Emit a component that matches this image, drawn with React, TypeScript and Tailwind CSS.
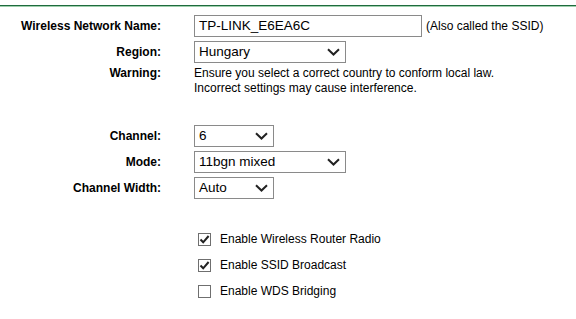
import { ReactNode } from 'react'

const font = { fontFamily: '"Liberation Sans", Arial, sans-serif' }

function Chevron() {
  return (
    <svg width="13" height="8" viewBox="0 0 13 8" className="shrink-0">
      <path d="M1 1.2 L6.5 6.5 L12 1.2" fill="none" stroke="#222" strokeWidth="2" />
    </svg>
  )
}

function Select({ value, width }: { value: string; width: string }) {
  return (
    <div className={`${width} h-[22px] border border-[#8a8a8a] bg-white flex items-center justify-between pl-[4px] pr-[5px] text-[13.5px] text-black`}>
      <span>{value}</span>
      <Chevron />
    </div>
  )
}

function Row({ label, children, className = '' }: { label: string; children: ReactNode; className?: string }) {
  return (
    <div className={`flex items-center ${className}`}>
      <div className="w-[161px] text-right text-[12px] font-bold text-black">{label}</div>
      <div className="ml-[33px] flex items-center">{children}</div>
    </div>
  )
}

function Check({ checked, label }: { checked: boolean; label: string }) {
  return (
    <div className="h-[26px] flex items-center pl-[198px]">
      <div className="w-[13px] h-[13px] border border-[#6f6f6f] bg-white flex items-center justify-center">
        {checked && (
          <svg width="11" height="11" viewBox="0 0 11 11">
            <path d="M1.5 5.5 L4.2 8.3 L9.6 2" fill="none" stroke="#222" strokeWidth="2" />
          </svg>
        )}
      </div>
      <span className="ml-[9px] text-[12px] text-black">{label}</span>
    </div>
  )
}

export default function App() {
  return (
    <div className="w-[576px] h-[319px] bg-white overflow-hidden" style={font}>
      <div className="h-[5px]" />
      <div className="h-px bg-[#1f6b3e]" />
      <div className="h-px bg-[#9fd0ad]" />

      <Row label="Wireless Network Name:" className="mt-[8px]">
        <div className="w-[228px] h-[22px] border border-[#8a8a8a] bg-white flex items-center pl-[4px] text-[13.5px] text-black">
          TP-LINK_E6EA6C
        </div>
        <span className="ml-[4px] text-[12px] text-black">(Also called the SSID)</span>
      </Row>

      <Row label="Region:" className="mt-[4px]">
        <Select value="Hungary" width="w-[152px]" />
      </Row>

      <div className="flex items-start mt-[3px]">
        <div className="w-[161px] text-right text-[12px] font-bold text-black leading-[15px]">Warning:</div>
        <div className="ml-[33px] text-[12px] text-black leading-[15px]">
          <p>Ensure you select a correct country to conform local law.</p>
          <p>Incorrect settings may cause interference.</p>
        </div>
      </div>

      <Row label="Channel:" className="mt-[29px]">
        <Select value="6" width="w-[80px]" />
      </Row>

      <Row label="Mode:" className="mt-[4px]">
        <Select value="11bgn mixed" width="w-[152px]" />
      </Row>

      <Row label="Channel Width:" className="mt-[4px]">
        <Select value="Auto" width="w-[80px]" />
      </Row>

      <div className="mt-[27px]">
        <Check checked label="Enable Wireless Router Radio" />
        <Check checked label="Enable SSID Broadcast" />
        <Check checked={false} label="Enable WDS Bridging" />
      </div>
    </div>
  )
}
